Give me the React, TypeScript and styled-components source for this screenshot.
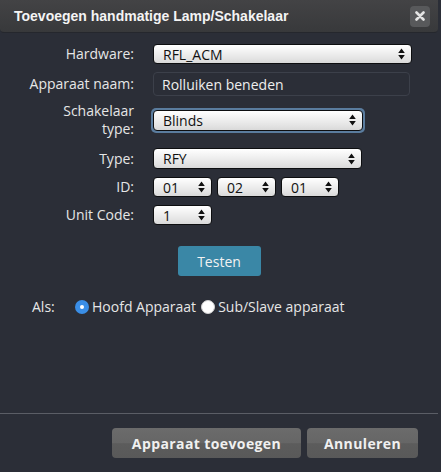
import React from "react";
import styled, { createGlobalStyle, css } from "styled-components";

const GlobalStyle = createGlobalStyle`
  html, body {
    margin: 0;
    padding: 0;
    background: #2b2e37;
  }
  body {
    font-family: "Open Sans", "DejaVu Sans", sans-serif;
    color: #e8e8e8;
  }
`;

const Dialog = styled.div`
  width: 438px;
  height: 472px;
  display: flex;
  flex-direction: column;
  background: #2b2e37;
`;

const TitleBar = styled.div`
  height: 33px;
  flex: none;
  box-sizing: border-box;
  padding: 0 8px 0 14px;
  display: flex;
  align-items: center;
  justify-content: space-between;
  background: linear-gradient(#434345, #38393b);
  border-bottom: 1px solid #25272d;
  border-radius: 0 0 4px 4px;
`;

const Title = styled.span`
  font-family: "Liberation Sans", Arial, sans-serif;
  font-weight: bold;
  font-size: 14px;
  color: #f4f4f4;
`;

const CloseButton = styled.button`
  width: 20px;
  height: 21px;
  padding: 0;
  border: none;
  border-radius: 4px;
  background: #58595b;
  display: flex;
  align-items: center;
  justify-content: center;
  cursor: pointer;
`;

const Form = styled.div`
  padding: 11px 0 0 0;
  display: flex;
  flex-direction: column;
`;

const Row = styled.div<{ $h: number; $mb: number }>`
  display: flex;
  align-items: center;
  height: ${(p) => p.$h}px;
  margin-bottom: ${(p) => p.$mb}px;
`;

const Label = styled.label`
  width: 134px;
  flex: none;
  text-align: right;
  font-size: 14px;
  line-height: 18px;
  color: #e6e6e6;
  margin-right: 19px;
`;

const Fields = styled.div`
  display: flex;
  gap: 5px;
`;

const SelectBox = styled.div<{ $w: number; $h?: number }>`
  width: ${(p) => p.$w}px;
  height: ${(p) => p.$h ?? 20}px;
  box-sizing: border-box;
  padding: 0 6px 0 9px;
  display: flex;
  align-items: center;
  justify-content: space-between;
  border: 1px solid #0d0e10;
  border-radius: 4px;
  background: linear-gradient(#ffffff, #e4e4e4 75%, #d9d9d9);
  color: #111;
  font-size: 14px;
`;

const FocusRing = styled.div`
  padding: 2px;
  margin-left: -2px;
  border-radius: 5px;
  background: #5a7c9e;
  display: flex;
`;

const TextInput = styled.div`
  width: 257px;
  height: 24px;
  box-sizing: border-box;
  padding: 0 8px;
  display: flex;
  align-items: center;
  border: 1px solid #3c404a;
  border-radius: 4px;
  background: #2b2e37;
  color: #eeeeee;
  font-size: 14px;
`;

const TestRow = styled.div`
  display: flex;
  justify-content: center;
  margin-top: 21px;
`;

const TestButton = styled.button`
  width: 83px;
  height: 30px;
  border: none;
  border-radius: 3px;
  background: #3a87a6;
  color: #f2f2f2;
  font-family: "Open Sans", sans-serif;
  font-size: 14px;
  cursor: pointer;
`;

const RadioRow = styled.div`
  display: flex;
  align-items: center;
  margin: 21px 0 0 32px;
  font-size: 14px;
  color: #e6e6e6;
`;

const AsLabel = styled.span`
  width: 43px;
`;

const RadioOption = styled.span`
  display: flex;
  align-items: center;
  gap: 3px;
  margin-right: 5px;
`;

const RadioDot = styled.span<{ $checked?: boolean }>`
  width: 14px;
  height: 14px;
  border-radius: 50%;
  box-sizing: border-box;
  display: flex;
  align-items: center;
  justify-content: center;
  ${(p) =>
    p.$checked
      ? css`
          background: #3a8ee6;
          &::after {
            content: "";
            width: 4px;
            height: 4px;
            border-radius: 50%;
            background: #fff;
          }
        `
      : css`
          background: #ffffff;
          border: 1px solid #cfcfcf;
        `}
`;

const Spacer = styled.div`
  flex: 1;
`;

const Footer = styled.div`
  border-top: 1px solid #5b5e66;
  padding: 14px 20px 14px 0;
  display: flex;
  justify-content: flex-end;
  gap: 6px;
`;

const FooterButton = styled.button<{ $w: number }>`
  width: ${(p) => p.$w}px;
  height: 30px;
  border: none;
  border-radius: 4px;
  background: linear-gradient(#6b6b6b, #666666 50%, #5c5c5c 52%, #595959);
  color: #f0f0f0;
  font-family: "Open Sans", sans-serif;
  font-weight: bold;
  font-size: 14px;
  letter-spacing: 0.4px;
  cursor: pointer;
`;

const Arrows = () => (
  <svg width="7" height="12" viewBox="0 0 7 12">
    <path d="M3.5 0.5 L6.8 5 L0.2 5 Z M0.2 7 L6.8 7 L3.5 11.5 Z" fill="#111" />
  </svg>
);

const Select = ({ value, w, h }: { value: string; w: number; h?: number }) => (
  <SelectBox $w={w} $h={h}>
    <span>{value}</span>
    <Arrows />
  </SelectBox>
);

export default function App() {
  return (
    <>
      <GlobalStyle />
      <Dialog>
        <TitleBar>
          <Title>Toevoegen handmatige Lamp/Schakelaar</Title>
          <CloseButton aria-label="close">
            <svg width="10" height="10" viewBox="0 0 10 10">
              <path d="M1.5 1.5 L8.5 8.5 M8.5 1.5 L1.5 8.5" stroke="#e4e4e4" strokeWidth="2.6" strokeLinecap="round" />
            </svg>
          </CloseButton>
        </TitleBar>
        <Form>
          <Row $h={20} $mb={8}>
            <Label>Hardware:</Label>
            <Select value="RFL_ACM" w={259} />
          </Row>
          <Row $h={24} $mb={7}>
            <Label>Apparaat naam:</Label>
            <TextInput>Rolluiken beneden</TextInput>
          </Row>
          <Row $h={34} $mb={11}>
            <Label>
              Schakelaar
              <br />
              type:
            </Label>
            <FocusRing>
              <Select value="Blinds" w={210} h={21} />
            </FocusRing>
          </Row>
          <Row $h={21} $mb={8}>
            <Label>Type:</Label>
            <Select value="RFY" w={209} h={21} />
          </Row>
          <Row $h={20} $mb={8}>
            <Label>ID:</Label>
            <Fields>
              <Select value="01" w={59} />
              <Select value="02" w={59} />
              <Select value="01" w={58} />
            </Fields>
          </Row>
          <Row $h={20} $mb={0}>
            <Label>Unit Code:</Label>
            <Select value="1" w={59} />
          </Row>
        </Form>
        <TestRow>
          <TestButton>Testen</TestButton>
        </TestRow>
        <RadioRow>
          <AsLabel>Als:</AsLabel>
          <RadioOption>
            <RadioDot $checked />
            Hoofd Apparaat
          </RadioOption>
          <RadioOption>
            <RadioDot />
            Sub/Slave apparaat
          </RadioOption>
        </RadioRow>
        <Spacer />
        <Footer>
          <FooterButton $w={189}>Apparaat toevoegen</FooterButton>
          <FooterButton $w={111}>Annuleren</FooterButton>
        </Footer>
      </Dialog>
    </>
  );
}
